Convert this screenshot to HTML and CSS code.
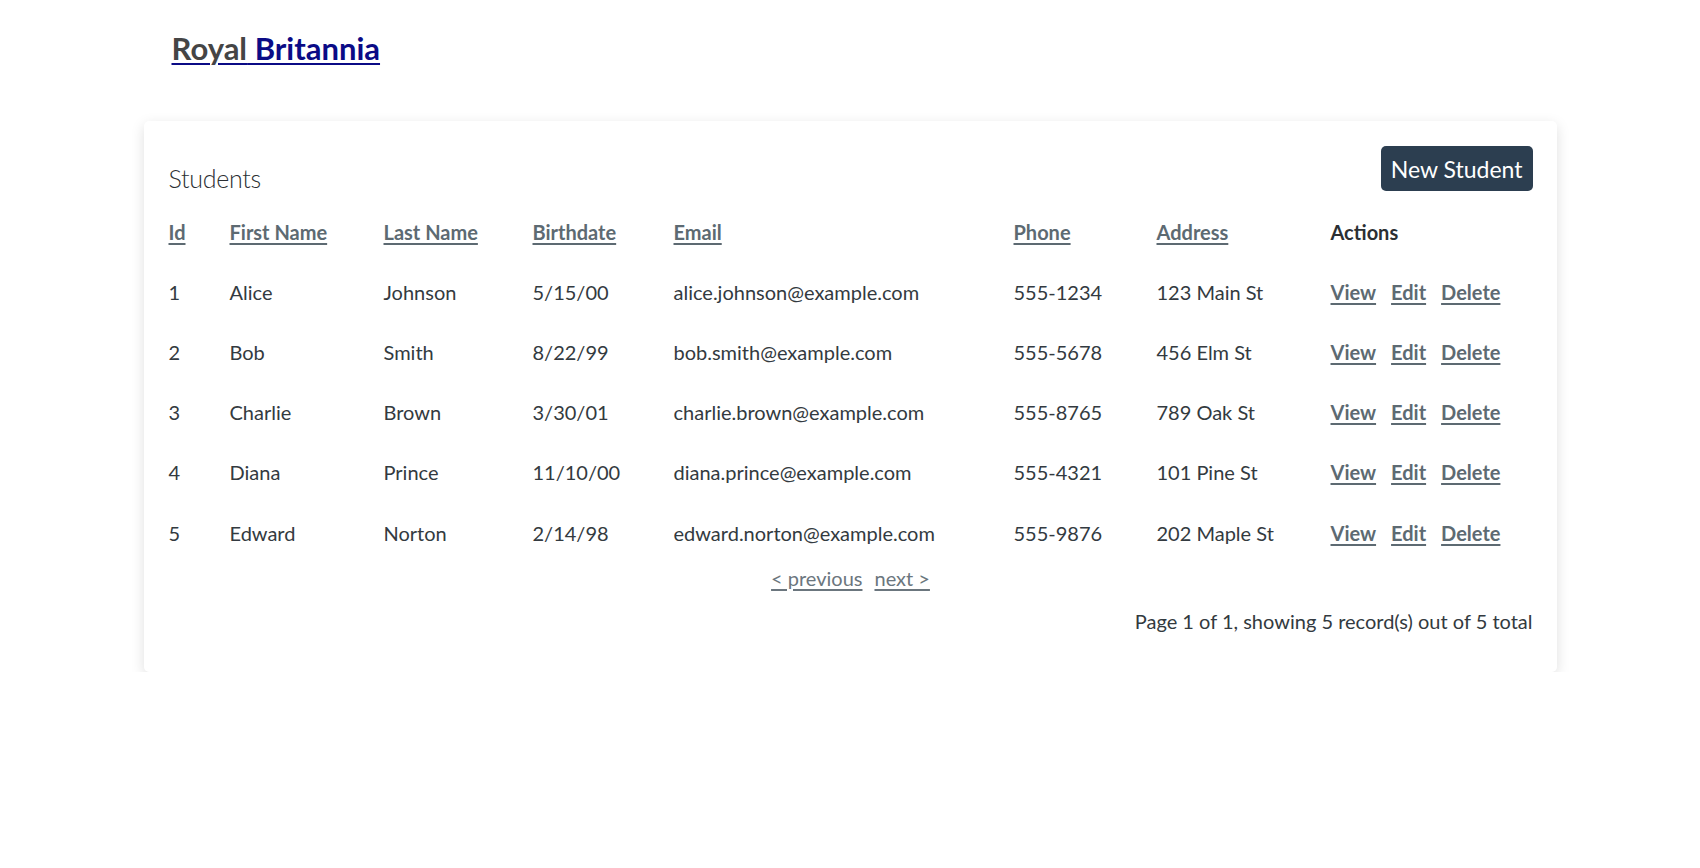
FILE: index.html
```html
<!DOCTYPE html>
<html>
<head>
<meta charset="utf-8">
<link rel="stylesheet" href="styles.css">
</head>
<body>
<div class="page">
  <header class="site-header">
    <a class="brand" href="#"><span class="brand-first">Royal</span> Britannia</a>
  </header>
  <main class="card">
    <div class="card-head">
      <h2 class="card-title">Students</h2>
      <a class="btn" href="#">New Student</a>
    </div>
    <table class="grid">
      <colgroup>
        <col class="c-id"><col class="c-first"><col class="c-last"><col class="c-birth"><col class="c-email"><col class="c-phone"><col class="c-addr"><col class="c-actions">
      </colgroup>
      <thead>
        <tr>
          <th><a href="#">Id</a></th>
          <th><a href="#">First Name</a></th>
          <th><a href="#">Last Name</a></th>
          <th><a href="#">Birthdate</a></th>
          <th><a href="#">Email</a></th>
          <th><a href="#">Phone</a></th>
          <th><a href="#">Address</a></th>
          <th>Actions</th>
        </tr>
      </thead>
      <tbody>
        <tr><td>1</td><td>Alice</td><td>Johnson</td><td>5/15/00</td><td>alice.johnson@example.com</td><td>555-1234</td><td>123 Main St</td><td class="actions"><a href="#">View</a><a href="#">Edit</a><a href="#">Delete</a></td></tr>
        <tr><td>2</td><td>Bob</td><td>Smith</td><td>8/22/99</td><td>bob.smith@example.com</td><td>555-5678</td><td>456 Elm St</td><td class="actions"><a href="#">View</a><a href="#">Edit</a><a href="#">Delete</a></td></tr>
        <tr><td>3</td><td>Charlie</td><td>Brown</td><td>3/30/01</td><td>charlie.brown@example.com</td><td>555-8765</td><td>789 Oak St</td><td class="actions"><a href="#">View</a><a href="#">Edit</a><a href="#">Delete</a></td></tr>
        <tr><td>4</td><td>Diana</td><td>Prince</td><td>11/10/00</td><td>diana.prince@example.com</td><td>555-4321</td><td>101 Pine St</td><td class="actions"><a href="#">View</a><a href="#">Edit</a><a href="#">Delete</a></td></tr>
        <tr><td>5</td><td>Edward</td><td>Norton</td><td>2/14/98</td><td>edward.norton@example.com</td><td>555-9876</td><td>202 Maple St</td><td class="actions"><a href="#">View</a><a href="#">Edit</a><a href="#">Delete</a></td></tr>
      </tbody>
    </table>
    <nav class="pager">
      <a href="#">&lt; previous</a>
      <a href="#">next &gt;</a>
    </nav>
    <p class="summary">Page 1 of 1, showing 5 record(s) out of 5 total</p>
  </main>
</div>
</body>
</html>
```
FILE: styles.css
```css
html, body {
  margin: 0;
  padding: 0;
  background: #ffffff;
}
body {
  font-family: Lato, "Open Sans", sans-serif;
  color: #333a40;
}
.page {
  width: 1413px;
  margin: 0 auto;
}
.site-header {
  padding: 30px 0 0 28px;
  height: 121px;
  box-sizing: border-box;
}
.brand {
  font-size: 31px;
  line-height: 1.2;
  font-weight: 700;
  color: #0b0b86;
  text-decoration: underline;
  text-decoration-thickness: 2px;
  text-underline-offset: 3px;
}
.brand-first {
  color: #454545;
}
.card {
  background: #fff;
  border-radius: 5px;
  box-shadow: 0 4px 14px rgba(0, 0, 0, 0.13);
  padding: 25px 24px 39px 25px;
}
.card-head {
  display: flex;
  justify-content: space-between;
  align-items: flex-start;
}
.card-title {
  margin: 17px 0 0 0;
  font-family: Lato, sans-serif;
  font-weight: 300;
  font-size: 25px;
  line-height: 1.2;
  letter-spacing: -0.3px;
  color: #2b2f33;
}
.btn {
  display: inline-flex;
  align-items: center;
  height: 45px;
  padding: 0 10px;
  box-sizing: border-box;
  background: #2c3e50;
  color: #fff;
  border-radius: 5px;
  font-size: 23px;
  text-decoration: none;
}
.grid {
  width: 100%;
  border-collapse: collapse;
  table-layout: fixed;
  margin-top: 9px;
  font-size: 20px;
}
.c-id { width: 61px; }
.c-first { width: 154px; }
.c-last { width: 149px; }
.c-birth { width: 141px; }
.c-email { width: 340px; }
.c-phone { width: 143px; }
.c-addr { width: 174px; }
.grid th, .grid td {
  text-align: left;
  padding: 18.05px 0;
  line-height: 24px;
  white-space: nowrap;
}
.grid th {
  font-weight: 700;
  color: #2b2f33;
}
.grid th a, .actions a {
  color: #5d6a72;
  font-weight: 700;
  text-decoration: underline;
  text-underline-offset: 3px;
}
.grid td {
  color: #333a40;
}
.actions a {
  margin-right: 15px;
}
.pager {
  display: flex;
  justify-content: center;
  gap: 12px;
  font-size: 20px;
  line-height: 24px;
  margin-top: 3px;
}
.pager a {
  color: #6b767e;
  text-decoration: underline;
  text-underline-offset: 3px;
}
.summary {
  margin: 19px 0 0 0;
  text-align: right;
  font-size: 20px;
  line-height: 24px;
  color: #333a40;
}
```
